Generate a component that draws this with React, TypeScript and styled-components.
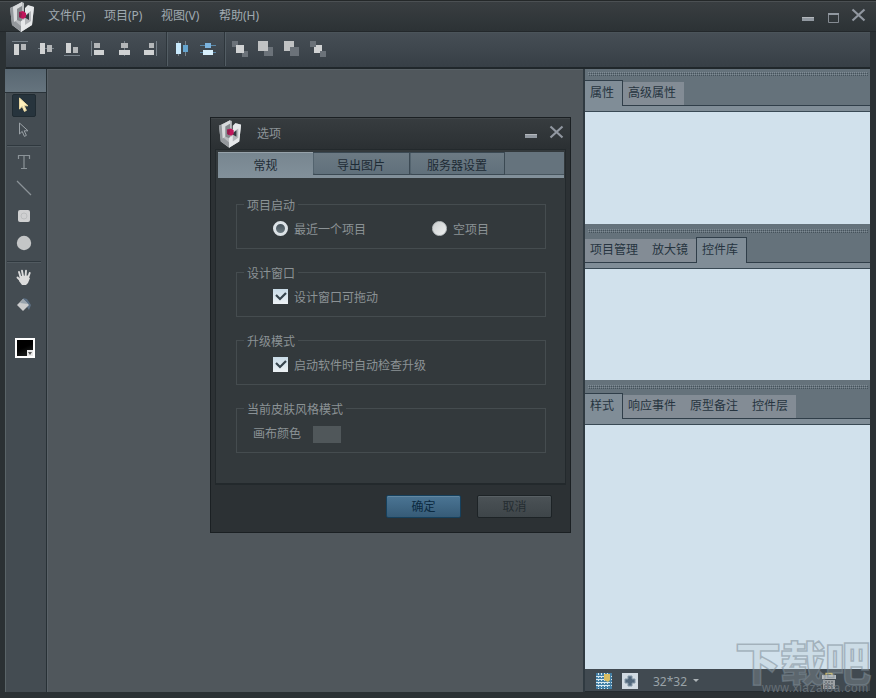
import React from 'react';
import styled, { createGlobalStyle, css } from 'styled-components';

const Global = createGlobalStyle`
  * { box-sizing: border-box; }
  html, body { margin: 0; padding: 0; overflow: hidden; background: #2b3033; }
  body { font: 12px/16px "Noto Sans", "Noto Sans CJK SC", sans-serif; }
`;

const Window = styled.div`
  position: relative;
  width: 876px;
  height: 698px;
  padding: 0 6px 6px 5px;
  display: flex;
  flex-direction: column;
  overflow: hidden;
  background: #2b3134;
  border-top: 1px solid #242829;
`;

const TitleBar = styled.header`
  flex: none;
  height: 31px;
  margin: 0 -6px 0 -5px;
  padding: 0 10px 0 9px;
  display: flex;
  align-items: center;
  border-top: 1px solid #4b5053;
  border-bottom: 1px solid #23282b;
  background: linear-gradient(#393e41, #2c3235);
`;

const Menu = styled.nav`
  display: flex;
  flex: 1;
  margin: -1px 0 0 13px;
  color: #a0aab1;
`;

const MenuItem = styled.span<{ $w: number }>`
  width: ${(p) => p.$w}px;
  white-space: nowrap;
`;

const WindowControls = styled.div`
  display: flex;
  gap: 10px;
  margin-top: -4px;
`;

const ToolBar = styled.div`
  flex: none;
  height: 37px;
  margin-left: 1px;
  padding: 1px 0 3px 6px;
  display: flex;
  align-items: center;
  background: linear-gradient(#464e55, #373f46);
  border-top: 1px solid #4b545a;
  border-bottom: 2px solid #20272b;
`;

const IconGroup = styled.div<{ $gap: number }>`
  display: flex;
  gap: 10px;
  margin-right: ${(p) => p.$gap}px;
`;

const Divider = styled.div<{ $gap: number }>`
  width: 2px;
  height: 34px;
  margin-right: ${(p) => p.$gap}px;
  border-left: 1px solid #2e363c;
  border-right: 1px solid #535d64;
`;

const Body = styled.div`
  flex: 1;
  min-height: 0;
  display: flex;
`;

const ToolColumn = styled.aside`
  width: 42px;
  display: flex;
  flex-direction: column;
  align-items: center;
  padding-right: 4px;
  background: #444c52;
  border-left: 1px solid #5a6468;
  border-right: 1px solid #283136;
`;

const ToolHead = styled.div`
  align-self: stretch;
  flex: none;
  height: 24px;
  margin: 0 -4px 0 -1px;
  background: linear-gradient(#586772, #66747e);
  border-bottom: 1px solid #293238;
`;

const Tool = styled.div<{ $h: number; $active?: boolean }>`
  width: 24px;
  height: ${(p) => p.$h}px;
  flex: none;
  display: flex;
  align-items: center;
  justify-content: center;
  ${(p) => p.$active && css`
    margin-top: 1px;
    background: #27343d;
    border: 1px solid #202b32;
    border-radius: 2px;
  `}
`;

const ToolRule = styled.hr`
  width: 34px;
  height: 2px;
  flex: none;
  margin: 0;
  border: 0;
  border-top: 1px solid #2f383e;
  border-bottom: 1px solid #515a60;
`;

const Swatch = styled.div`
  flex: none;
  display: flex;
  align-items: flex-end;
  justify-content: flex-end;
  width: 20px;
  height: 20px;
  margin-top: 19px;
  margin-left: 2px;
  border: 2px solid #fff;
  background: linear-gradient(155deg, #000 45%, #262828);
`;

const Canvas = styled.main`
  flex: 1;
  background: #50575c;
  border-left: 1px solid #5a6268;
  border-top: 1px solid #596166;
`;

const Side = styled.aside`
  width: 287px;
  display: flex;
  flex-direction: column;
  border-left: 2px solid #303a41;
`;

const Grip = styled.div<{ $h: number }>`
  height: ${(p) => p.$h}px;
  padding: ${(p) => p.$h - 8}px 2px 4px 3px;
  background: #65727b;

  &::before {
    content: '';
    display: block;
    height: 4px;
    background:
      repeating-linear-gradient(90deg, #7f8b94 0 1px, transparent 1px 2px) 0 0 / 100% 1px no-repeat,
      repeating-linear-gradient(90deg, #46535c 0 1px, transparent 1px 2px) 1px 1px / 100% 1px no-repeat,
      repeating-linear-gradient(90deg, #7f8b94 0 1px, transparent 1px 2px) 0 2px / 100% 1px no-repeat,
      repeating-linear-gradient(90deg, #46535c 0 1px, transparent 1px 2px) 1px 3px / 100% 1px no-repeat;
  }
`;

const PanelTabs = styled.div`
  height: 32px;
  display: flex;
  align-items: flex-start;
  background: linear-gradient(#65727b 25px, #303e49 25px 26px, #808d97 26px 31px, #394954 31px);
`;

const PanelTab = styled.div<{ $active?: boolean; $w: number; $first?: boolean }>`
  width: ${(p) => p.$w}px;
  height: 23px;
  margin-top: 2px;
  padding: 3px 0 0 5px;
  white-space: nowrap;
  color: #26343f;
  background: #838c95;
  ${(p) => p.$active && css`
    height: 26px;
    margin-top: 0;
    padding-top: 4px;
    background: #808d97;
    border: solid #303e49;
    border-width: 1px 1px 0 ${p.$first ? 0 : 1}px;
  `}
`;

const PanelContent = styled.div<{ $h: number }>`
  height: ${(p) => p.$h}px;
  background: #d1e1ec;
`;

const SideFooter = styled.footer`
  flex: 1;
  display: flex;
  align-items: center;
  padding: 2px 33px 0 11px;
  background: #414a51;
  color: #9aa3a8;
  border-bottom: 1px solid #252c30;
  svg { flex: none; }
`;

const ZoomLabel = styled.span`
  margin: 1px 6px 0 15px;
`;

const Trash = styled.span`
  display: flex;
  margin-left: auto;
`;

const Watermark = styled.div`
  position: absolute;
  left: 735px;
  top: 626px;
  width: 138px;
  pointer-events: none;
  white-space: nowrap;
`;

const MarkTitle = styled.div`
  height: 54px;
  font: 900 46px/66px "Noto Sans CJK SC", sans-serif;
  letter-spacing: -1px;
  color: rgba(190, 203, 212, 0.22);
  -webkit-text-stroke: 1.5px rgba(126, 140, 150, 0.55);
`;

const MarkUrl = styled.div`
  padding-left: 27px;
  font: 12px/14px "Liberation Sans", sans-serif;
  letter-spacing: 0.5px;
  color: #666f76;
`;

const Dialog = styled.section`
  position: absolute;
  left: 210px;
  top: 116px;
  width: 361px;
  height: 416px;
  padding: 0 4px;
  display: flex;
  flex-direction: column;
  background: #2c3134;
  border: 1px solid #1b2023;
`;

const DialogTitle = styled.div`
  height: 31px;
  flex: none;
  margin: 0 -4px;
  padding: 0 6px 0 7px;
  display: flex;
  align-items: center;
  color: #8d9498;
  background: linear-gradient(#373c3f, #2b3033);
  border-top: 1px solid #414649;
`;

const DialogName = styled.span`
  flex: 1;
  margin: -1px 0 0 15px;
`;

const DialogPane = styled.div`
  height: 336px;
  flex: none;
  padding: 2px 1px 0 2px;
  background: #33393c;
  border: 1px solid #23292c;
  border-bottom-width: 2px;
`;

const DialogTabs = styled.div`
  height: 26px;
  width: 346px;
  display: flex;
  background: linear-gradient(#65737d 22px, #46545d 22px 23px, #82909a 23px);
`;

const DialogTab = styled.div<{ $w: number; $active?: boolean }>`
  width: ${(p) => p.$w}px;
  height: ${(p) => (p.$active ? 26 : 23)}px;
  padding-top: 5px;
  text-align: center;
  color: #1e2b35;
  background: ${(p) => (p.$active ? 'linear-gradient(#778690, #82909a)' : 'linear-gradient(#6c7a84, #60707b)')};
  border-top: 1px solid #96a2aa;
  ${(p) => !p.$active && css`
    border: solid #3b4953;
    border-width: 1px 1px 1px 0;
    box-shadow: inset 1px 0 #53636e;
    border-bottom-left-radius: 2px;
  `}
`;

const Form = styled.div`
  display: flex;
  flex-direction: column;
  gap: 23px;
  padding: 26px 18px 0 18px;
`;

const Group = styled.section`
  height: 45px;
  border: 1px solid #454c4f;
  color: #8b9295;
`;

const Legend = styled.div`
  width: fit-content;
  height: 16px;
  margin: -7px 0 0 7px;
  padding: 0 3px;
  background: #33393c;
`;

const Row = styled.div<{ $left: number }>`
  display: flex;
  align-items: center;
  height: 16px;
  margin-top: 8px;
  padding-left: ${(p) => p.$left}px;
`;

const Option = styled.label<{ $w?: number }>`
  display: flex;
  align-items: center;
  gap: 6px;
  width: ${(p) => (p.$w ? `${p.$w}px` : 'auto')};
`;

const Radio = styled.span<{ $on?: boolean }>`
  width: 15px;
  height: 15px;
  margin-top: -3px;
  border-radius: 50%;
  border: ${(p) => (p.$on ? '3px solid #dce2e6' : '1px solid #c0c5c7')};
  background: ${(p) => (p.$on ? 'linear-gradient(#46525a, #6b7980)' : 'linear-gradient(135deg, #cbcecf, #eef0f0)')};
`;

const CheckMark = styled.svg`
  width: 15px;
  height: 15px;
  margin-top: -3px;
  background: linear-gradient(#c9dbe7, #edf2f5);
`;

const ColorChip = styled.span`
  width: 28px;
  height: 17px;
  margin-left: 12px;
  background: #50575a;
`;

const Actions = styled.div`
  display: flex;
  gap: 16px;
  justify-content: flex-end;
  padding: 10px 14px 0 0;
`;

const Button = styled.button<{ $primary?: boolean }>`
  width: 75px;
  height: 23px;
  padding: 0;
  font: inherit;
  border-radius: 2px;
  color: ${(p) => (p.$primary ? '#0c2a40' : '#252d31')};
  background: ${(p) => (p.$primary ? 'linear-gradient(#4b7594, #365b77)' : 'linear-gradient(#4b5256, #3e4549)')};
  border: 1px solid ${(p) => (p.$primary ? '#16405c' : '#1d2326')};
  box-shadow: inset 0 1px ${(p) => (p.$primary ? '#6388a2' : '#596064')};
`;

const Logo = ({ w, h }: { w: number; h: number }) => (
  <svg width={w} height={h} viewBox="0 0 26 30">
    <path d="M1 6 13 0l2 1v10l6-7 4 1-2 18-11 7-9-7z" fill="#b9bcbf" />
    <path d="m1 6 3-1 2 14 7 6v5L3 23z" fill="#94989c" />
    <path d="M4 5 13 0v4L8 7v11l-3 2z" fill="#d8dadc" />
    <path d="M8 7l5-3v16l-5-2z" fill="#85898d" />
    <path d="m12 19 4-2V6l3-3 6 2-2 18-11 7z" fill="#e6e8ea" />
    <path d="m16 13 6-4v10l-6 4z" fill="#b4b6ba" />
    <path d="m15 15 5-4v7z" fill="#343a40" />
    <path d="m10 10 4-1 3 2v4l-3 2-4-2z" fill="#c0165b" />
    <path d="m10 10 3 1-1 5-2-1z" fill="#8e1f4c" />
  </svg>
);

const Minimize = () => (
  <svg width="15" height="16"><path d="M1 10h12v4H1z" fill="#9198a0" /><path d="M1 10h12v1H1z" fill="#b3b7bc" /></svg>
);
const Maximize = () => (
  <svg width="15" height="16"><path d="M2.5 6.5h10v9h-10z" fill="none" stroke="#858b92" /><path d="M2 6h11v2H2z" fill="#9198a0" /></svg>
);
const Close = () => (
  <svg width="15" height="16"><path d="m1.5 2.5 12 11m0-11-12 11" stroke="#9197a0" strokeWidth="2.2" fill="none" /></svg>
);

type Box = [number, number, number, number, string];
const A = '#d0d2d3';
const B = '#b4b7b9';
const L = '#78828a';
const D = '#6b7279';

const alignIcons: Box[][] = [
  [[0, 0, 16, 1, L], [2, 3, 5, 11, A], [9, 3, 5, 6, B]],
  [[0, 7, 16, 1, L], [2, 2, 5, 11, A], [9, 4, 5, 7, B]],
  [[0, 14, 16, 1, L], [2, 2, 5, 10, A], [9, 6, 5, 6, B]],
  [[1, 0, 1, 15, L], [4, 2, 6, 5, B], [4, 9, 10, 5, A]],
  [[8, 0, 1, 15, L], [5, 2, 7, 5, B], [3, 9, 11, 5, A]],
  [[14, 0, 1, 15, L], [7, 2, 5, 5, B], [2, 9, 10, 5, A]],
];
const spreadIcons: Box[][] = [
  [[4, 0, 1, 15, L], [11, 0, 1, 15, L], [2, 2, 5, 11, '#c9eafd'], [9, 4, 5, 7, '#65a5cf']],
  [[0, 4, 16, 1, '#5b88a8'], [0, 11, 16, 1, '#5b88a8'], [5, 2, 6, 5, '#7cb4df'], [3, 9, 10, 5, '#d8f0fd']],
];
const orderIcons: Box[][] = [
  [[0, 0, 6, 6, D], [10, 10, 6, 6, D], [4, 4, 8, 8, A]],
  [[6, 6, 9, 9, D], [0, 0, 10, 10, '#c0c2c3']],
  [[0, 0, 10, 10, '#c0c2c3'], [6, 6, 9, 9, D]],
  [[4, 4, 8, 8, A], [0, 0, 6, 6, D], [10, 10, 6, 6, D]],
];

const Blocks = ({ boxes }: { boxes: Box[] }) => (
  <svg width="16" height="16" shapeRendering="crispEdges">
    {boxes.map(([x, y, w, h, c], i) => <rect key={i} x={x} y={y} width={w} height={h} fill={c} />)}
  </svg>
);

const Cursor = ({ solid }: { solid?: boolean }) => (
  <svg width="12" height="18">
    <path d="M1.5 1v11l2.7-2.6 2.2 5 2-1-2.2-4.6H10z" fill={solid ? '#fff0bd' : 'none'} stroke={solid ? '#e6d5a0' : '#9ba2a7'} />
  </svg>
);

const Tools = () => (
  <ToolColumn>
    <ToolHead />
    <Tool $h={23} $active><Cursor solid /></Tool>
    <Tool $h={28}><Cursor /></Tool>
    <ToolRule />
    <Tool $h={29}>
      <svg width="14" height="16"><path d="M1.5 5V1.5h11V5M7 2v12.5m-3 0h6" fill="none" stroke="#8b9398" strokeWidth="1.2" /></svg>
    </Tool>
    <Tool $h={24}><svg width="16" height="16"><path d="m1 1 14 14" stroke="#8b9398" strokeWidth="1.2" /></svg></Tool>
    <Tool $h={31}>
      <svg width="14" height="14"><rect x="1" y="1" width="12" height="12" rx="2" fill="#cfd0d1" /><circle cx="7" cy="7" r="3" fill="none" stroke="#bbbdbe" /></svg>
    </Tool>
    <Tool $h={24}><svg width="16" height="16"><circle cx="8" cy="8" r="7.2" fill="#c4c6c7" /></svg></Tool>
    <Tool $h={6} />
    <ToolRule />
    <Tool $h={28}>
      <svg width="16" height="17">
        <path d="M4.5 8 3 3m4 4L6 1.8M9.6 7 10 1.8M12 9l1.7-5M5 12 1.5 8.5" stroke="#dcdcdc" strokeWidth="1.9" strokeLinecap="round" />
        <path d="m4 7 8.2-.5 1.3 2.5L14 9l-2 5-2 2H6l-3-4z" fill="#dcdcdc" />
      </svg>
    </Tool>
    <Tool $h={28}>
      <svg width="16" height="16"><path d="m7 1 4 1 4 6-2 5-4-6z" fill="#5c6f83" /><path d="m7 2 6 6-6 6-6-6z" fill="#cbcccd" /><path d="m7 2 5 5-8-1z" fill="#98a3ad" /></svg>
    </Tool>
    <Swatch><svg width="6" height="6"><path d="M0 0h6v6H0z" fill="#e8e8e8" /><path d="M1 2h4L3 5z" fill="#555" /></svg></Swatch>
  </ToolColumn>
);

interface PanelProps {
  grip: number;
  height: number;
  tabs: { name: string; w: number; active?: boolean }[];
}

const Panel = ({ grip, height, tabs }: PanelProps) => (
  <>
    <Grip $h={grip} />
    <PanelTabs>
      {tabs.map((t, i) => <PanelTab key={t.name} $w={t.w} $active={t.active} $first={i === 0}>{t.name}</PanelTab>)}
    </PanelTabs>
    <PanelContent $h={height} />
  </>
);

const Check = () => (
  <CheckMark viewBox="0 0 15 15"><path d="m3 6 4 4 6-6" fill="none" stroke="#36444d" strokeWidth="2.2" /></CheckMark>
);

const OptionsDialog = () => (
  <Dialog>
    <DialogTitle>
      <Logo w={24} h={28} />
      <DialogName>选项</DialogName>
      <WindowControls><Minimize /><Close /></WindowControls>
    </DialogTitle>
    <DialogPane>
      <DialogTabs>
        <DialogTab $w={95} $active>常规</DialogTab>
        <DialogTab $w={97}>导出图片</DialogTab>
        <DialogTab $w={95}>服务器设置</DialogTab>
      </DialogTabs>
      <Form>
        <Group>
          <Legend>项目启动</Legend>
          <Row $left={36}>
            <Option $w={159}><Radio $on />最近一个项目</Option>
            <Option><Radio />空项目</Option>
          </Row>
        </Group>
        <Group>
          <Legend>设计窗口</Legend>
          <Row $left={36}><Option><Check />设计窗口可拖动</Option></Row>
        </Group>
        <Group>
          <Legend>升级模式</Legend>
          <Row $left={36}><Option><Check />启动软件时自动检查升级</Option></Row>
        </Group>
        <Group>
          <Legend>当前皮肤风格模式</Legend>
          <Row $left={16}>画布颜色<ColorChip /></Row>
        </Group>
      </Form>
    </DialogPane>
    <Actions>
      <Button $primary>确定</Button>
      <Button>取消</Button>
    </Actions>
  </Dialog>
);

export default function App() {
  return (
    <Window>
      <Global />
      <TitleBar>
        <Logo w={26} h={30} />
        <Menu>
          <MenuItem $w={56}>文件(F)</MenuItem>
          <MenuItem $w={57}>项目(P)</MenuItem>
          <MenuItem $w={58}>视图(V)</MenuItem>
          <MenuItem $w={50}>帮助(H)</MenuItem>
        </Menu>
        <WindowControls><Minimize /><Maximize /><Close /></WindowControls>
      </TitleBar>
      <ToolBar>
        <IconGroup $gap={8}>{alignIcons.map((b, i) => <Blocks key={i} boxes={b} />)}</IconGroup>
        <Divider $gap={6} />
        <IconGroup $gap={8}>{spreadIcons.map((b, i) => <Blocks key={i} boxes={b} />)}</IconGroup>
        <Divider $gap={6} />
        <IconGroup $gap={0}>{orderIcons.map((b, i) => <Blocks key={i} boxes={b} />)}</IconGroup>
      </ToolBar>
      <Body>
        <Tools />
        <Canvas />
        <Side>
          <Panel grip={11} height={112} tabs={[{ name: '属性', w: 38, active: true }, { name: '高级属性', w: 61 }]} />
          <Panel grip={13} height={111} tabs={[{ name: '项目管理', w: 62 }, { name: '放大镜', w: 49 }, { name: '控件库', w: 51, active: true }]} />
          <Panel grip={13} height={244} tabs={[{ name: '样式', w: 38, active: true }, { name: '响应事件', w: 62 }, { name: '原型备注', w: 62 }, { name: '控件层', w: 49 }]} />
          <SideFooter>
            <svg width="16" height="16">
              <path d="M0 0h16v16H0z" fill="#447fa5" />
              <path d="M2.5 0v16M5.5 0v16M8.5 0v16M11.5 0v16M0 3.5h16M0 6.5h16M0 9.5h16M0 12.5h16" stroke="#d5e8f0" strokeDasharray="2 1" />
              <path d="M8 1h6v6l-2 2-4-2z" fill="#d9bd62" />
            </svg>
            <svg width="26" height="16"><path d="M10 0h16v16H10z" fill="#d2dbe2" /><path d="M16 3h4v3h3v4h-3v3h-4v-3h-3V6h3z" fill="#52687c" stroke="#8497a6" /></svg>
            <ZoomLabel>32*32</ZoomLabel>
            <svg width="6" height="4"><path d="M0 0h6L3 3z" fill="#adb4b8" /></svg>
            <Trash>
              <svg width="16" height="18"><path d="M5 3.5v-2h6v2" fill="none" stroke="#c9b766" strokeWidth="1.3" /><path d="M1 3h14v4H1z" fill="#b6b9bb" /><path d="M2 8h12v9H2z" fill="#9da1a4" /><path d="M5 9v7m3-7v7m3-7v7" stroke="#53595e" strokeDasharray="2 1" /></svg>
            </Trash>
          </SideFooter>
        </Side>
      </Body>
      <Watermark>
        <MarkTitle>下载吧</MarkTitle>
        <MarkUrl>www.xiazaiba.com</MarkUrl>
      </Watermark>
      <OptionsDialog />
    </Window>
  );
}
